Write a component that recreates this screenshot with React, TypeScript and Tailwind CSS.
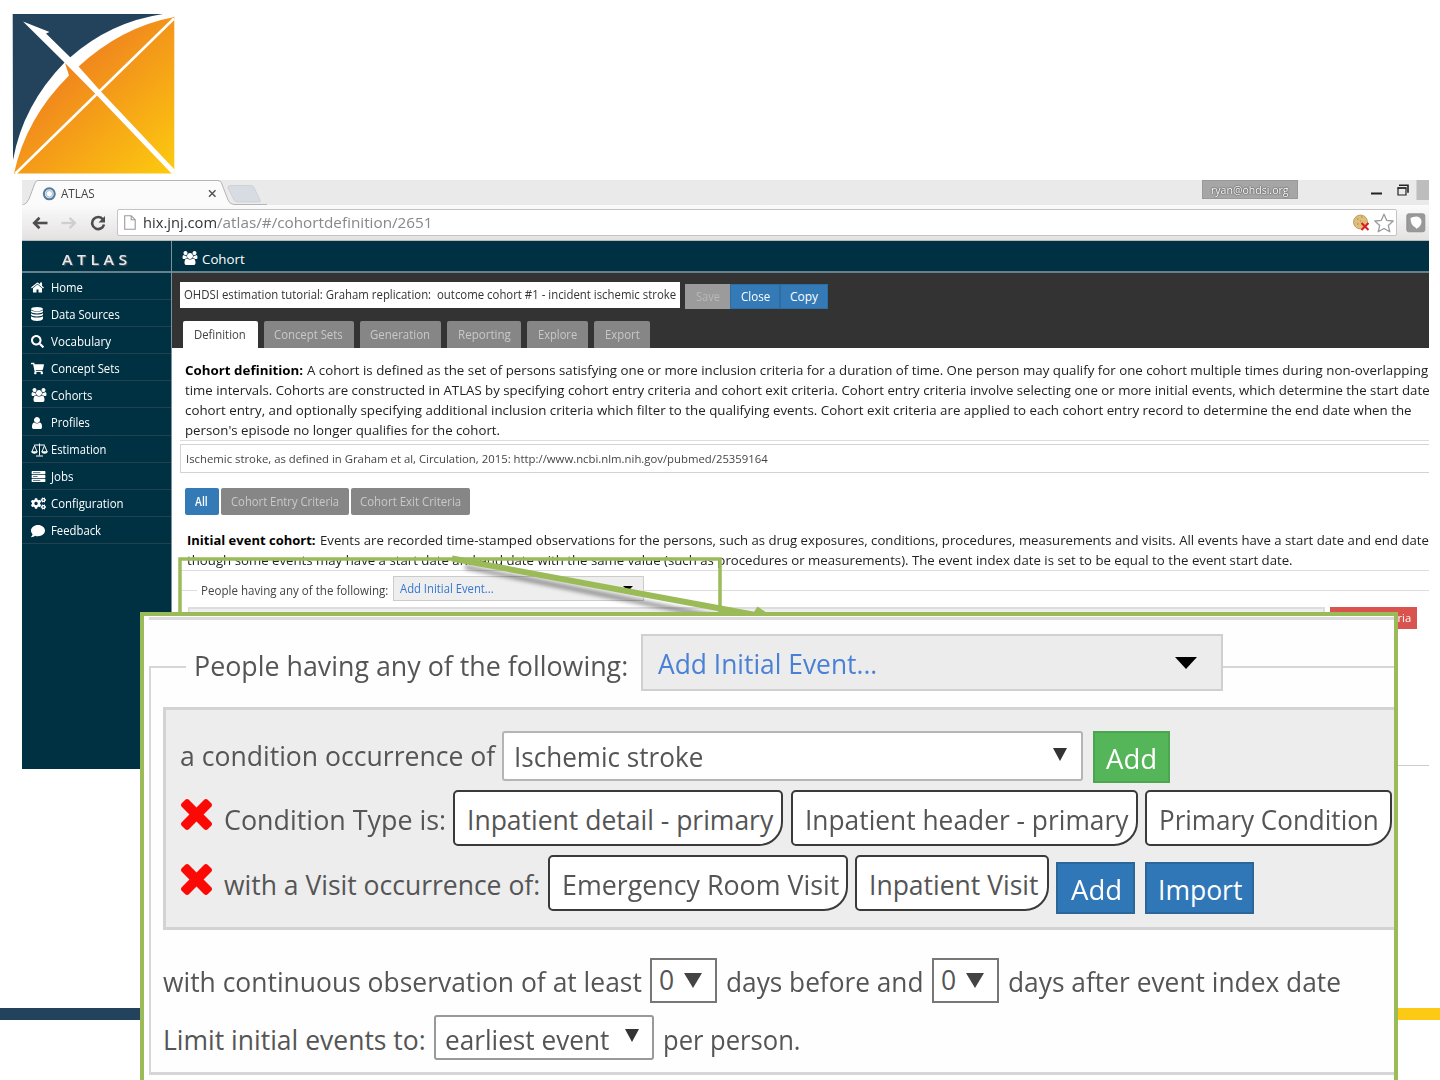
import { useLayoutEffect, useRef, type ReactNode } from "react";
import { FaSearch, FaShoppingCart, FaCogs, FaComment } from "react-icons/fa";

/* A single line of text condensed or stretched to the width of its box. */
function T({ className = "", children }: { className?: string; children: ReactNode }) {
  const box = useRef<HTMLSpanElement>(null);
  const text = useRef<HTMLSpanElement>(null);
  useLayoutEffect(() => {
    if (box.current && text.current) {
      const ratio = box.current.clientWidth / text.current.offsetWidth;
      text.current.style.transform = `scaleX(${ratio})`;
    }
  });
  return (
    <span ref={box} className={"block shrink-0 whitespace-pre " + className}>
      <span ref={text} className="inline-block origin-left">
        {children}
      </span>
    </span>
  );
}

const USERS =
  "M593 896q-162 5-265 128h-134q-82 0-138-40.5t-56-118.5q0-353 124-353 6 0 43.5 21t97.5 42.5 119 21.5q67 0 133-23-5 37-5 66 0 139 81 256zm1071 637q0 120-73 189.5t-194 69.5h-874q-121 0-194-69.5t-73-189.5q0-53 3.5-103.5t14-109 26.5-108.5 43-97.5 62-81 85.5-53.5 111.5-20q10 0 43 21.5t73 48 107 48 135 21.5 135-21.5 107-48 73-48 43-21.5q61 0 111.5 20t85.5 53.5 62 81 43 97.5 26.5 108.5 14 109 3.5 103.5zm-1024-1277q0 106-75 181t-181 75-181-75-75-181 75-181 181-75 181 75 75 181zm704 384q0 159-112.5 271.5t-271.5 112.5-271.5-112.5-112.5-271.5 112.5-271.5 271.5-112.5 271.5 112.5 112.5 271.5zm576 225q0 78-56 118.5t-138 40.5h-134q-103-123-265-128 81-117 81-256 0-29-5-66 66 23 133 23 59 0 119-21.5t97.5-42.5 43.5-21q124 0 124 353zm-128-609q0 106-75 181t-181 75-181-75-75-181 75-181 181-75 181 75 75 181z";
const HOME =
  "M1472 992v480q0 26-19 45t-45 19h-384v-384h-256v384h-384q-26 0-45-19t-19-45v-480q0-1 .5-3t.5-3l575-474 575 474q1 2 1 6zm223-69l-62 74q-8 9-21 11h-3q-13 0-21-7l-692-577-692 577q-12 8-24 7-13-2-21-11l-62-74q-8-10-7-23.5t11-21.5l719-599q32-26 76-26t76 26l244 204v-195q0-14 9-23t23-9h192q14 0 23 9t9 23v408l219 182q10 8 11 21.5t-7 23.5z";
const USER =
  "M1536 1399q0 109-62.5 187t-150.5 78h-854q-88 0-150.5-78t-62.5-187q0-85 8.5-160.5t31.5-152 58.5-131 94-89 134.5-34.5q131 128 313 128t313-128q76 0 134.5 34.5t94 89 58.5 131 31.5 152 8.5 160.5zm-256-887q0 159-112.5 271.5t-271.5 112.5-271.5-112.5-112.5-271.5 112.5-271.5 271.5-112.5 271.5 112.5 112.5 271.5z";
const TIMES =
  "M1490 1322q0 40-28 68l-136 136q-28 28-68 28t-68-28l-294-294-294 294q-28 28-68 28t-68-28l-136-136q-28-28-28-68t28-68l294-294-294-294q-28-28-28-68t28-68l136-136q28-28 68-28t68 28l294 294 294-294q28-28 68-28t68 28l136 136q28 28 28 68t-28 68l-294 294 294 294q28 28 28 68z";

function Users() {
  return (
    <svg viewBox="0 0 1920 1792" className="h-[14px] w-[16px]" fill="currentColor">
      <path d={USERS} />
    </svg>
  );
}

function Database() {
  return (
    <svg viewBox="0 0 12 14" className="h-[14px] w-3" fill="currentColor">
      <ellipse cx="6" cy="2.1" rx="6" ry="2.1" />
      <path d="M0 3.300c1.500 1.700 10.500 1.700 12 0v1.500c-1 2.300-11 2.300-12 0z" />
      <path d="M0 6.300c1.500 1.700 10.500 1.700 12 0v1.500c-1 2.300-11 2.300-12 0z" />
      <path d="M0 9.300c1.500 1.700 10.500 1.700 12 0v2.500c-1 2.900-11 2.900-12 0z" />
    </svg>
  );
}

function Scale() {
  return (
    <svg viewBox="0 0 17 14" className="h-[14px] w-[17px]" fill="none" stroke="currentColor" strokeWidth="1">
      <path d="M8.500 0.500v12M5 13h7M3.300 2h10.400M3.500 2.500L0.800 9h5.400zM13.500 2.500L10.800 9h5.400z" />
      <path d="M0.300 8.500h6.200c-.5 2.900-5.700 2.900-6.200 0zM10.500 8.500h6.200c-.5 2.900-5.700 2.900-6.200 0z" fill="currentColor" stroke="none" />
    </svg>
  );
}

function Server() {
  return (
    <svg viewBox="0 0 15 12" className="h-[11px] w-[15px]" fill="currentColor">
      <path d="M.5 0h14q.5 0 .5.500v2.500q0 .5-.5.500H.5Q0 3.500 0 3V.5Q0 0 .5 0zm0 4.300h14q.5 0 .5.500v2.400q0 .5-.5.500H.5Q0 7.700 0 7.200V4.800q0-.5.500-.5zm0 4.200h14q.5 0 .5.500v2.500q0 .5-.5.500H.5q-.5 0-.5-.5V9q0-.5.500-.5z" />
      <path d="M1.500 1.800h8M1.500 6h5M1.500 10.300h8" stroke="#003142" strokeWidth=".7" />
    </svg>
  );
}

const NAV: { label: string; w: string; icon: ReactNode }[] = [
  { label: "Home", w: "w-[32px]", icon: <svg viewBox="70 220 1650 1350" className="h-[11px] w-[13px]" fill="currentColor"><path d={HOME} /></svg> },
  { label: "Data Sources", w: "w-[69px]", icon: <Database /> },
  { label: "Vocabulary", w: "w-[60px]", icon: <FaSearch size={13} /> },
  { label: "Concept Sets", w: "w-[69px]", icon: <FaShoppingCart size={13} /> },
  { label: "Cohorts", w: "w-[41px]", icon: <Users /> },
  { label: "Profiles", w: "w-[39px]", icon: <svg viewBox="256 128 1280 1536" className="h-3 w-[12px]" fill="currentColor"><path d={USER} /></svg> },
  { label: "Estimation", w: "w-[55px]", icon: <Scale /> },
  { label: "Jobs", w: "w-[23px]", icon: <Server /> },
  { label: "Configuration", w: "w-[73px]", icon: <FaCogs size={15} /> },
  { label: "Feedback", w: "w-[50px]", icon: <FaComment size={14} /> },
];

const TABS = [
  { label: "Concept Sets", box: "w-[90px]", w: "w-[69px]" },
  { label: "Generation", box: "w-[81px]", w: "w-[60px]" },
  { label: "Reporting", box: "w-[74px]", w: "w-[53px]" },
  { label: "Explore", box: "w-[61px]", w: "w-[39px]" },
  { label: "Export", box: "w-[56px]", w: "w-[35px]" },
];

function Logo() {
  return (
    <svg viewBox="12 13 163 161" className="mt-[13px] ml-3 block h-[161px] w-[163px] shrink-0">
      <defs>
        <linearGradient id="sun" gradientUnits="userSpaceOnUse" x1="62" y1="70" x2="160" y2="178">
          <stop offset="0" stopColor="#f0841e" />
          <stop offset="1" stopColor="#fcc80f" />
        </linearGradient>
      </defs>
      <path d="M12.700 14H163Q110 22 70 57.500L64.500 62.500Q23 105 13 160z" fill="#22435b" />
      <path d="M14 173.500Q26 118 69 75.500L65 63L77.500 67.500Q121 27 174.300 17V173.500z" fill="url(#sun)" />
      <path d="M15.500 173.500L174 18.500" stroke="#fff" strokeWidth="2.600" />
      <path d="M23 21.500L49.500 32L46 33.500L71 58L99.500 90L174.500 169.500V174H172L97 95.500L65 63z" fill="#fff" />
    </svg>
  );
}

function BrowserChrome() {
  return (
    <div className="flex h-[61px] shrink-0 flex-col bg-[#eaeaea]">
      <div className="flex h-[25px]">
        <div className="relative flex h-[25px] w-[240px] items-center">
          <svg viewBox="0 0 245 25" className="absolute top-0 left-0 h-[25px] w-[245px]">
            <path d="M0 25.500Q5 24 7 19L13 3Q14 .5 16 .5H196Q198.500 .5 199.500 3L206 20Q208 24.500 212 24.500H245V26H0z" fill="#fbfbfb" stroke="#b5b5b5" />
            <path d="M208 5.500H229Q231 5.500 232 7.500L238 20Q239 22 237 22H216Q213 22 212 20L206 8Q205.500 5.500 208 5.500z" fill="#d6dce2" stroke="#c5cad0" strokeWidth=".7" />
            <circle cx="27.300" cy="13.800" r="5.500" fill="#dbe6ee" stroke="#55799b" strokeWidth="2" />
            <circle cx="27.300" cy="13.800" r="3.200" fill="#fff" stroke="#a7bccd" strokeWidth="1" />
            <path d="M187 10.300l6.500 6.500m0-6.500l-6.500 6.500" stroke="#555" strokeWidth="1.500" />
          </svg>
          <T className="relative mt-0.5 ml-[39px] w-[34px] text-[12px] text-[#444]">ATLAS</T>
        </div>
        <div className="ml-[940px] flex h-[19px] w-[96px] items-center justify-center border border-[#999] bg-[#a6a6a6]">
          <T className="mt-px w-[78px] text-[11.5px] text-white [text-shadow:0_0_2px_#444,0_0_1px_#444]">ryan@ohdsi.org</T>
        </div>
        <svg viewBox="0 0 60 25" className="ml-[71px] h-[25px] w-[60px]">
          <path d="M2 13.500h11" stroke="#222" strokeWidth="2" />
          <path d="M29 8h8v7h-8z" fill="none" stroke="#222" strokeWidth="1.200" />
          <path d="M28.500 8h9M30 5.300h9v7.500" fill="none" stroke="#222" strokeWidth="1.600" />
          <path d="M47.500 0h13v20h-13z" fill="#bdbdbd" />
        </svg>
      </div>
      <div className="flex h-9 items-center border-b border-[#b9b9b9] bg-linear-to-b from-[#fbfbfb] to-[#e4e1e1]">
        <svg viewBox="0 0 16 14" className="ml-2.5 h-[14px] w-4" fill="none" stroke="#4d4d4d">
          <path d="M2 7h13.500" strokeWidth="2.600" />
          <path d="M7.500 1.800L2.200 7l5.300 5.200" strokeWidth="2.600" />
        </svg>
        <svg viewBox="0 0 16 14" className="ml-[13px] h-[14px] w-4" fill="none" stroke="#cfcfcf">
          <path d="M.5 7H14" strokeWidth="2.400" />
          <path d="M8.500 1.800L13.800 7l-5.300 5.200" strokeWidth="2.400" />
        </svg>
        <svg viewBox="0 0 16 16" className="ml-[13px] h-4 w-4">
          <path d="M13 4.500A6 6 0 1 0 14 9.500" fill="none" stroke="#4d4d4d" strokeWidth="2.600" />
          <path d="M15 1v6.500H8.500z" fill="#4d4d4d" />
        </svg>
        <div className="ml-[11px] flex h-[27px] w-[1280px] items-center rounded-xs border border-[#c4c4c4] bg-white">
          <svg viewBox="0 0 12 15" className="ml-[6px] h-[15px] w-3">
            <path d="M.7.700h6.500l4 4v9.500H.7zM7.200.700v4h4" fill="none" stroke="#999" strokeWidth="1.100" />
          </svg>
          <T className="ml-[6.500px] w-[74px] text-[14.5px] text-[#333]">hix.jnj.com</T>
          <T className="w-[216px] text-[14.5px] text-[#888]">/atlas/#/cohortdefinition/2651</T>
          <svg viewBox="0 0 44 22" className="ml-[918px] h-[22px] w-[44px] shrink-0">
            <circle cx="9.500" cy="10" r="7" fill="#dfbd7c" stroke="#b68f49" strokeWidth=".8" />
            <path d="M6 7h1.500M10 5h1.500M6 12h1.500M9 9h1" stroke="#a98145" strokeWidth="1.200" />
            <path d="M10.500 11l7 7m0-7l-7 7" stroke="#d8201f" strokeWidth="2.100" />
            <path d="M33 2.300l2.700 6 6.500.7-4.900 4.400 1.500 6.400-5.800-3.300-5.800 3.300 1.500-6.400-4.900-4.400 6.500-.7z" fill="#fff" stroke="#999" strokeWidth="1.300" strokeLinejoin="round" />
          </svg>
        </div>
        <svg viewBox="0 0 20 20" className="ml-[9px] h-5 w-5 shrink-0">
          <rect x=".8" y=".8" width="18" height="18" rx="2" fill="#999" stroke="#888" strokeWidth=".8" />
          <path d="M4.500 5q2.500-1.500 6-1.500q5 .5 5 5.500q-.5 4-4.500 6.500q-1 .5-1.500-1q-5-2-5-9.500z" fill="#fff" />
        </svg>
      </div>
    </div>
  );
}

function Sidebar() {
  return (
    <div className="flex w-[150px] shrink-0 flex-col border-r border-[#7e9099] bg-[#003142]">
      <div className="flex h-8 shrink-0 items-center border-b-2 border-[#66818b] pt-1.5 pl-10">
        <T className="w-[70px] text-[14px] font-semibold tracking-[4px] text-[#e4e9eb] [text-shadow:1px_1px_1px_#555]">ATLAS</T>
      </div>
      {NAV.map((n) => (
        <div key={n.label} className="flex h-[27.1px] shrink-0 items-center border-b border-[#24414f] pt-0.5 pl-2 text-white">
          <span className="flex w-[21px] shrink-0 items-center pl-px">{n.icon}</span>
          <T className={"pt-px text-[12px] " + n.w}>{n.label}</T>
        </div>
      ))}
    </div>
  );
}

function Content() {
  return (
    <div className="flex min-w-0 flex-1 flex-col overflow-hidden">
      <div className="flex h-8 shrink-0 items-center gap-[4px] border-b-2 border-[#66818b] bg-[#003142] pt-2 pl-[10px] text-white">
        <span className="mb-1"><Users /></span>
        <T className="w-[43px] text-[13.3px]">Cohort</T>
      </div>
      <div className="flex h-[75px] shrink-0 flex-col justify-between bg-[#333] pt-2 pl-2">
        <div className="flex items-center">
          <div className="flex h-[26px] w-[500px] items-center bg-white pl-1 text-[#333]">
            <T className="w-[492px] text-[11.8px]">OHDSI estimation tutorial: Graham replication:  outcome cohort #1 - incident ischemic stroke</T>
          </div>
          <div className="mt-[3px] ml-[5px] flex h-[25px] text-[12px] text-white">
            <span className="flex w-[45px] items-center justify-center bg-[#9b9b9b] text-[#b9b9b9]"><T className="w-[24px]">Save</T></span>
            <span className="flex w-[50px] items-center justify-center border border-[#2e6da4] bg-[#337ab7]"><T className="w-[29px] font-medium">Close</T></span>
            <span className="flex w-[48px] items-center justify-center border border-[#2e6da4] bg-[#337ab7]"><T className="w-[28px] font-medium">Copy</T></span>
          </div>
        </div>
        <div className="flex h-[27px] gap-[6.2px] pl-[2.500px] text-[12px]">
          <div className="flex w-[75px] items-center justify-center rounded-t-xs bg-white text-[#444]"><T className="w-[52px]">Definition</T></div>
          {TABS.map((t) => (
            <div key={t.label} className={"flex items-center justify-center rounded-t-xs bg-[#868686] text-[#c9c9c9] " + t.box}>
              <T className={t.w}>{t.label}</T>
            </div>
          ))}
        </div>
      </div>
      <div className="flex flex-1 flex-col bg-white pt-3 pl-2 text-[#222]">
        <div className="flex flex-col pl-[5px] text-[13px] leading-5">
          <div className="flex gap-[4px]">
            <T className="w-[118px] font-bold text-black">Cohort definition:</T>
            <T className="w-[1121px]">A cohort is defined as the set of persons satisfying one or more inclusion criteria for a duration of time. One person may qualify for one cohort multiple times during non-overlapping</T>
          </div>
          <T className="w-[1245px]">time intervals. Cohorts are constructed in ATLAS by specifying cohort entry criteria and cohort exit criteria. Cohort entry criteria involve selecting one or more initial events, which determine the start date</T>
          <T className="w-[1227px]">cohort entry, and optionally specifying additional inclusion criteria which filter to the qualifying events. Cohort exit criteria are applied to each cohort entry record to determine the end date when the</T>
          <T className="w-[315px]">person's episode no longer qualifies for the cohort.</T>
        </div>
        <div className="h-px shrink-0 bg-[#ddd]" />
        <div className="mt-[3px] flex h-[29px] shrink-0 items-center border border-r-0 border-[#d3d3d3] pt-px pl-[5px] text-[11.3px] text-[#444]">
          <T className="w-[582px]">Ischemic stroke, as defined in Graham et al, Circulation, 2015: http://www.ncbi.nlm.nih.gov/pubmed/25359164</T>
        </div>
        <div className="mt-[15px] flex h-[27px] shrink-0 gap-0.5 pl-[4.500px] text-[12px] text-[#c9c9c9]">
          <div className="flex w-[34px] items-center justify-center rounded-xs bg-[#337ab7] font-semibold text-white"><T className="w-[13px]">All</T></div>
          <div className="flex w-[128px] items-center justify-center rounded-xs bg-[#868686]"><T className="w-[108px]">Cohort Entry Criteria</T></div>
          <div className="flex w-[119px] items-center justify-center rounded-xs bg-[#868686]"><T className="w-[101px]">Cohort Exit Criteria</T></div>
        </div>
        <div className="mt-[15px] flex h-10 shrink-0 flex-col pl-[7px] text-[13px] leading-5">
          <div className="flex gap-[4px]">
            <T className="w-[129px] font-bold text-black">Initial event cohort:</T>
            <T className="w-[1109px]">Events are recorded time-stamped observations for the persons, such as drug exposures, conditions, procedures, measurements and visits. All events have a start date and end date</T>
          </div>
          <T className="w-[1106px]">though some events may have a start date and end date with the same value (such as procedures or measurements). The event index date is set to be equal to the event start date.</T>
        </div>
        <div className="h-px shrink-0 bg-[#ddd]" />
        <div className="mt-[5px] flex h-[25px] shrink-0 items-center">
          <div className="mt-1 ml-0.5 h-px w-[15px] bg-[#ddd]" />
          <T className="mt-1 ml-[4px] w-[187px] text-[12px] text-[#444]">People having any of the following:</T>
          <div className="ml-[5px] flex h-[25px] w-[251px] items-center justify-between border border-[#ccc] bg-[#eee] pr-2.5 pl-1.5">
            <T className="mt-px w-[94px] text-[12px] text-[#3576d2]">Add Initial Event...</T>
            <span className="border-x-[5px] border-t-[5px] border-x-transparent border-t-black" />
          </div>
          <div className="mt-1 h-px flex-1 bg-[#ddd]" />
        </div>
        <div className="mt-1.5 flex flex-1 items-start justify-between pr-3 pl-2">
          <div className="h-[120px] w-[1137px] border-2 border-[#ddd] bg-[#eee]" />
          <div className="flex h-[22px] w-[87px] items-center justify-end bg-[#d9534f] pr-1.5 text-[11.5px] font-medium text-white">
            <T className="w-[75px]">Delete Criteria</T>
          </div>
        </div>
        <div className="mb-[3px] h-px shrink-0 bg-[#ccc]" />
      </div>
    </div>
  );
}

function Pill({ box, w, children }: { box: string; w: string; children: ReactNode }) {
  return (
    <div className={"flex h-[56px] shrink-0 items-center rounded-[5px] rounded-br-[24px] border-[2.500px] border-[#3a3a3a] bg-white pt-1 pl-3 " + box}>
      <T className={w}>{children}</T>
    </div>
  );
}

function RedX() {
  return (
    <svg viewBox="302 366 1188 1188" className="mb-2 h-[31px] w-[31px] shrink-0" fill="#fb0a05">
      <path d={TIMES} />
    </svg>
  );
}

function Down({ className = "" }: { className?: string }) {
  return <span className={"border-x-[7px] border-t-[13px] border-x-transparent border-t-[#333] " + className} />;
}

function Callout() {
  return (
    <div className="absolute top-[612px] left-[140px] flex h-[480px] w-[1258px] flex-col overflow-hidden border-4 border-[#9bbb59] bg-[#fefefe] text-[26.5px] leading-none text-[#555]">
      <div className="mt-px ml-[5px] h-[3px] shrink-0 bg-[#dcdcdc]" />
      <div className="z-10 mt-[14px] flex h-[57px] shrink-0 items-center pl-[5px]">
        <div className="mt-2 h-0.5 w-[37px] bg-[#d6d6d6]" />
        <T className="mt-[7px] ml-2 w-[434px]">People having any of the following:</T>
        <div className="ml-[13px] flex h-[57px] w-[582px] items-center justify-between border-2 border-[#d0d0d0] bg-[#ececec] pr-[24px] pl-[15px]">
          <T className="mt-[3px] w-[219px] text-[#4a80d6]">Add Initial Event...</T>
          <span className="border-x-[11px] border-t-[12px] border-x-transparent border-t-black" />
        </div>
        <div className="mt-2 h-0.5 flex-1 bg-[#d6d6d6]" />
      </div>
      <div className="mt-[-25px] ml-[5px] flex h-[409px] shrink-0 flex-col border-b-[3px] border-l-2 border-[#d6d6d6]">
        <div className="mt-[41px] ml-3 flex h-[223px] shrink-0 flex-col border-y-[3px] border-l-[3px] border-[#d3d3d3] bg-[#ededed]">
          <div className="mt-[20px] flex h-[52px] shrink-0 items-center pl-[14px]">
            <T className="w-[315px]">a condition occurrence of</T>
            <div className="ml-[7px] flex h-[50px] w-[581px] items-center justify-between rounded-[3px] border-2 border-[#b5b5b5] bg-white pr-[14px] pl-[10px]">
              <T className="mt-[3px] w-[189px]">Ischemic stroke</T>
              <Down className="mb-1" />
            </div>
            <div className="mt-0.5 ml-[10px] flex h-[52px] w-[77px] items-center border-2 border-[#4ca650] bg-[#55b559] pt-1 pl-[11px] text-white">
              <T className="w-[51px] font-medium">Add</T>
            </div>
          </div>
          <div className="mt-[8px] flex h-[56px] shrink-0 items-center pl-[15px]">
            <RedX />
            <T className="mt-1 ml-[12px] w-[222px]">Condition Type is:</T>
            <div className="ml-[7px] flex gap-[7.500px]">
              <Pill box="w-[330px]" w="w-[306px]">Inpatient detail - primary</Pill>
              <Pill box="w-[347px]" w="w-[323px]">Inpatient header - primary</Pill>
              <Pill box="w-[247px]" w="w-[220px]">Primary Condition</Pill>
            </div>
          </div>
          <div className="mt-[9px] flex h-[60px] shrink-0 items-start pl-[15px]">
            <div className="flex h-14 items-center">
              <RedX />
              <T className="mt-1 ml-[12px] w-[316px]">with a Visit occurrence of:</T>
              <div className="ml-[8px] flex gap-[7px]">
                <Pill box="w-[300px]" w="w-[277px]">Emergency Room Visit</Pill>
                <Pill box="w-[194px]" w="w-[169px]">Inpatient Visit</Pill>
              </div>
            </div>
            <div className="mt-[7px] ml-[7px] flex h-[52px] w-[79px] shrink-0 items-center border-2 border-[#2b6699] bg-[#3077b8] pt-1 pl-[13px] text-white">
              <T className="w-[51px] font-medium">Add</T>
            </div>
            <div className="mt-[7px] ml-[10px] flex h-[52px] w-[109px] shrink-0 items-center border-2 border-[#2b6699] bg-[#3077b8] pt-1 pl-[11px] text-white">
              <T className="w-[84px] font-medium">Import</T>
            </div>
          </div>
        </div>
        <div className="mt-[28px] flex h-[45px] shrink-0 items-center pl-3">
          <T className="mt-[3px] w-[479px]">with continuous observation of at least</T>
          <div className="ml-[8px] flex h-[45px] w-[67px] items-center border-2 border-[#777] bg-white pl-[7px]">
            <T className="w-[15px]">0</T>
            <span className="ml-[10px] border-x-[9px] border-t-[15px] border-x-transparent border-t-[#444]" />
          </div>
          <T className="mt-[3px] ml-[9px] w-[197px]">days before and</T>
          <div className="ml-[9px] flex h-[45px] w-[67px] items-center border-2 border-[#777] bg-white pl-[7px]">
            <T className="w-[15px]">0</T>
            <span className="ml-[10px] border-x-[9px] border-t-[15px] border-x-transparent border-t-[#444]" />
          </div>
          <T className="mt-[3px] ml-[9px] w-[333px]">days after event index date</T>
        </div>
        <div className="mt-[12px] flex h-[45px] shrink-0 items-center pl-3">
          <T className="mt-[5px] w-[263px]">Limit initial events to:</T>
          <div className="ml-[8px] flex h-[45px] w-[220px] items-center justify-between rounded-[3px] border-2 border-[#999] bg-white pr-[13px] pl-[9px]">
            <T className="mt-[5px] w-[164px]">earliest event</T>
            <Down className="mb-1" />
          </div>
          <T className="mt-[5px] ml-[9px] w-[138px]">per person.</T>
        </div>
      </div>
    </div>
  );
}

export default function App() {
  return (
    <div className="relative flex h-[1080px] w-[1440px] flex-col overflow-hidden bg-white font-['Open_Sans','Noto_Sans',sans-serif]">
      <Logo />
      <div className="mt-1.5 ml-[22px] flex h-[589px] w-[1407px] shrink-0 flex-col overflow-hidden">
        <BrowserChrome />
        <div className="flex min-h-0 flex-1">
          <Sidebar />
          <Content />
        </div>
      </div>
      <div className="mt-[239px] flex h-3 shrink-0">
        <div className="w-1/2 bg-[#22435b]" />
        <div className="w-1/2 bg-[#fcc914]" />
      </div>
      <svg viewBox="170 550 620 70" className="absolute top-[550px] left-[170px] h-[70px] w-[620px]">
        <defs>
          <filter id="soft" x="-10%" y="-50%" width="120%" height="200%">
            <feGaussianBlur stdDeviation="2" />
          </filter>
        </defs>
        <path d="M180 616V559H720V616" fill="none" stroke="#9bbb59" strokeWidth="3.500" />
        <path d="M465 567L755 625" stroke="#000" strokeOpacity=".45" strokeWidth="4" filter="url(#soft)" />
        <path d="M452 558.500L758 615.500" stroke="#9bbb59" strokeWidth="6" />
        <path d="M757.500 606.500L770 615H752z" fill="#9bbb59" />
      </svg>
      <Callout />
    </div>
  );
}
